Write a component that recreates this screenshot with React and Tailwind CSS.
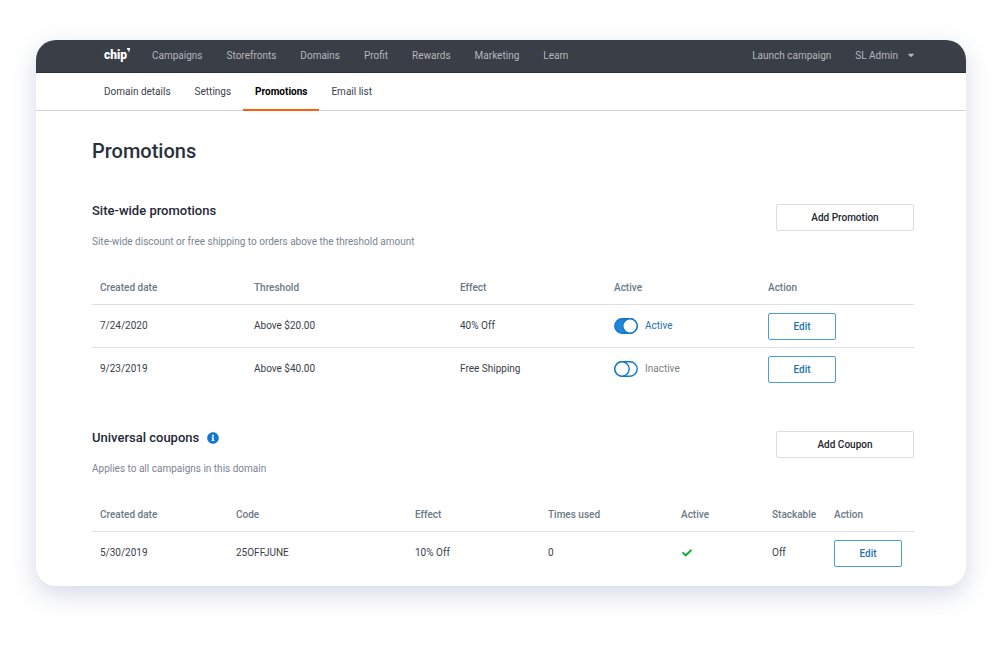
import { useState } from 'react'
import { FaCaretDown, FaCheck, FaInfoCircle } from 'react-icons/fa'

const NAV_LINKS = ['Campaigns', 'Storefronts', 'Domains', 'Profit', 'Rewards', 'Marketing', 'Learn']
const TABS = ['Domain details', 'Settings', 'Promotions', 'Email list']

const PROMOTIONS = [
  { date: '7/24/2020', threshold: 'Above $20.00', effect: '40% Off', active: true },
  { date: '9/23/2019', threshold: 'Above $40.00', effect: 'Free Shipping', active: false },
]

const COUPONS = [
  { date: '5/30/2019', code: '25OFFJUNE', effect: '10% Off', used: 0, active: true, stackable: 'Off' },
]

function Logo() {
  return (
    <a href="#" className="flex w-[26px] items-start text-white">
      <span className="text-[12px] leading-[14px] font-black">chip</span>
      <svg width="3" height="4" viewBox="0 0 3 4" className="shrink-0" aria-hidden="true">
        <path d="M0 0h3v1.8L2 4 1.2 3.6 1.6 1.8H0z" fill="currentColor" />
      </svg>
    </a>
  )
}

function TopNav() {
  return (
    <header className="flex h-[33px] items-center justify-between border-b border-[#2c303b] bg-[#3a3e47] pr-[50px] pb-0.5 pl-[68px] text-[10px] text-[#b4b7bd]">
      <div className="flex items-center gap-[22px]">
        <Logo />
        <nav className="flex items-center gap-6">
          {NAV_LINKS.map(link => (
            <a key={link} href="#">{link}</a>
          ))}
        </nav>
      </div>
      <div className="flex items-center gap-6">
        <a href="#">Launch campaign</a>
        <button type="button" className="flex items-center gap-2">
          SL Admin
          <FaCaretDown size={10} />
        </button>
      </div>
    </header>
  )
}

function TabBar() {
  return (
    <nav className="flex h-[38px] border-b border-[#d3d5dc] pl-14 text-[10px] text-[#3a404d]">
      {TABS.map(tab =>
        tab === 'Promotions' ? (
          <a
            key={tab}
            href="#"
            aria-current="page"
            className="-mb-px flex items-center border-b-2 border-[#ff5c10] px-3 font-bold text-black"
          >
            {tab}
          </a>
        ) : (
          <a key={tab} href="#" className="flex items-center px-3">{tab}</a>
        )
      )}
    </nav>
  )
}

function SectionHead({ title, note, action, info }) {
  return (
    <div className="flex items-start justify-between">
      <div>
        <h2 className="flex items-center gap-2 text-[13px] leading-[16px] font-medium text-[#1f2836]">
          {title}
          {info && <FaInfoCircle size={12} className="text-[#1377d1]" />}
        </h2>
        <p className="mt-4 text-[10px] leading-[14px] text-[#7a8591]">{note}</p>
      </div>
      <button
        type="button"
        className="mt-px h-[27px] w-[138px] rounded-xs border border-[#dcdde3] text-[10px] font-medium text-[#23262d]"
      >
        {action}
      </button>
    </div>
  )
}

function EditButton() {
  return (
    <button
      type="button"
      className="block h-[27px] w-[68px] rounded-xs border border-[#4a9ee0] text-[10px] font-medium text-[#1d74b0]"
    >
      Edit
    </button>
  )
}

function Toggle({ defaultOn }) {
  const [on, setOn] = useState(defaultOn)

  return (
    <label className="flex cursor-pointer items-center gap-[7px]">
      <input
        type="checkbox"
        role="switch"
        checked={on}
        onChange={e => setOn(e.target.checked)}
        className="sr-only"
      />
      <svg width="24" height="16" viewBox="0 0 24 16" fill="none" stroke="#1377cb" strokeWidth="1.4">
        <rect x="0.8" y="0.8" width="22.4" height="14.4" rx="7.2" fill={on ? '#2186d6' : '#fff'} />
        <circle cx={on ? 16 : 8} cy="8" r="7.2" fill="#fff" />
      </svg>
      <span className={on ? 'text-[#1d74b0]' : 'text-[#7d7f84]'}>{on ? 'Active' : 'Inactive'}</span>
    </label>
  )
}

function Table({ columns, children }) {
  return (
    <table className="w-full table-fixed text-left text-[10px] leading-[14px] text-[#3a3f4a]">
      <thead>
        <tr className="text-[#6b7887]">
          {columns.map(([label, width]) => (
            <th key={label} scope="col" className={`${width} px-2 pb-[9px] font-medium whitespace-nowrap`}>
              {label}
            </th>
          ))}
        </tr>
      </thead>
      <tbody>{children}</tbody>
    </table>
  )
}

const PROMOTION_COLUMNS = [
  ['Created date', 'w-[154px]'],
  ['Threshold', 'w-[206px]'],
  ['Effect', 'w-[154px]'],
  ['Active', 'w-[154px]'],
  ['Action', 'w-[154px]'],
]

const COUPON_COLUMNS = [
  ['Created date', 'w-[136px]'],
  ['Code', 'w-[179px]'],
  ['Effect', 'w-[133px]'],
  ['Times used', 'w-[133px]'],
  ['Active', 'w-[91px]'],
  ['Stackable', 'w-[62px]'],
  ['Action', 'w-[88px]'],
]

export default function App() {
  return (
    <div className="min-h-screen bg-white pt-10 pr-[34px] pb-[60px] pl-9 font-['Roboto',sans-serif]">
      <div className="overflow-hidden rounded-[20px] bg-white shadow-[0_8px_24px_rgba(60,80,150,0.22)]">
        <TopNav />
        <TabBar />

        <main className="pt-7 pr-[52px] pb-3 pl-14">
          <h1 className="text-[20px] leading-[24px] font-medium text-[#2a303c]">Promotions</h1>

          <section className="mt-10">
            <SectionHead
              title="Site-wide promotions"
              note="Site-wide discount or free shipping to orders above the threshold amount"
              action="Add Promotion"
            />
            <div className="mt-8">
              <Table columns={PROMOTION_COLUMNS}>
                {PROMOTIONS.map(promo => (
                  <tr key={promo.date} className="border-t border-[#dedfe1]">
                    <td className="px-2">{promo.date}</td>
                    <td className="px-2">{promo.threshold}</td>
                    <td className="px-2">{promo.effect}</td>
                    <td className="px-2"><Toggle defaultOn={promo.active} /></td>
                    <td className="px-2 pt-2 pb-[7px]"><EditButton /></td>
                  </tr>
                ))}
              </Table>
            </div>
          </section>

          <section className="mt-10">
            <SectionHead
              title="Universal coupons"
              note="Applies to all campaigns in this domain"
              action="Add Coupon"
              info
            />
            <div className="mt-8">
              <Table columns={COUPON_COLUMNS}>
                {COUPONS.map(coupon => (
                  <tr key={coupon.code} className="border-t border-[#dedfe1]">
                    <td className="px-2">{coupon.date}</td>
                    <td className="px-2">{coupon.code}</td>
                    <td className="px-2">{coupon.effect}</td>
                    <td className="px-2">{coupon.used}</td>
                    <td className="px-2">
                      {coupon.active && <FaCheck size={10} className="ml-px text-[#0bb02d]" aria-label="Active" />}
                    </td>
                    <td className="px-2">{coupon.stackable}</td>
                    <td className="px-2 pt-2 pb-[7px]"><EditButton /></td>
                  </tr>
                ))}
              </Table>
            </div>
          </section>
        </main>
      </div>
    </div>
  )
}
